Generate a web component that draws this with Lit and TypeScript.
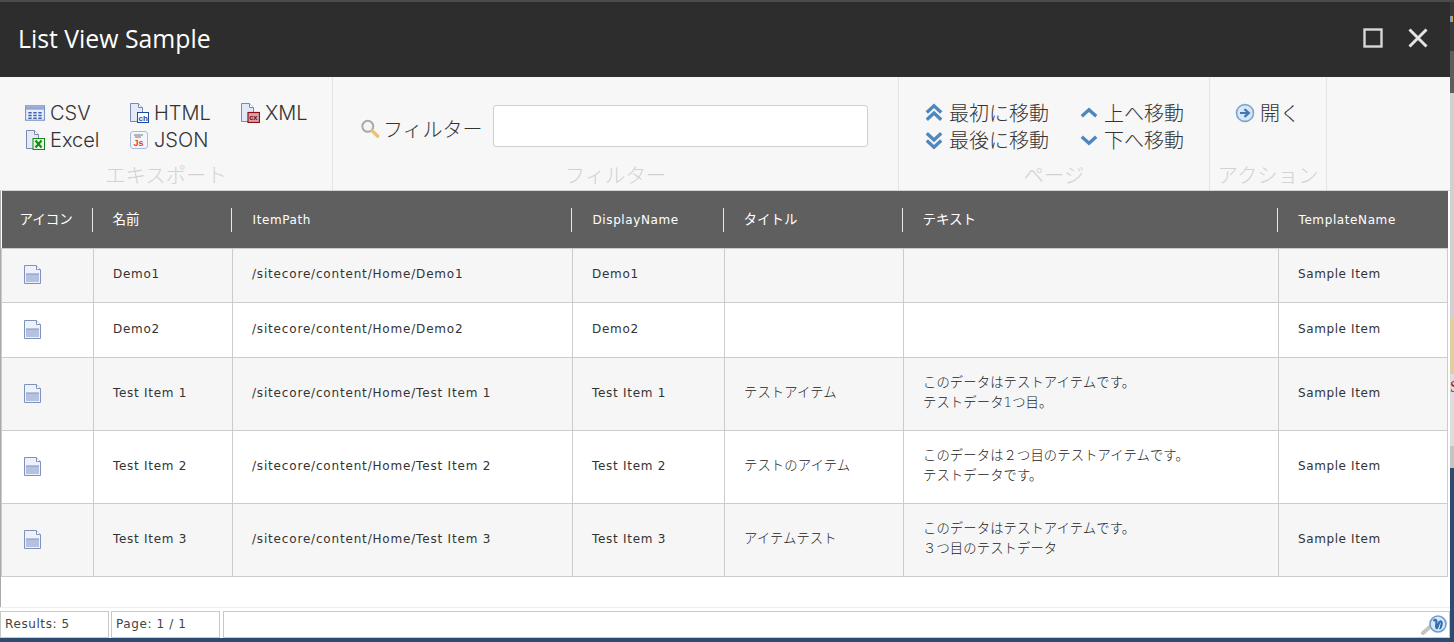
import { LitElement, css, html, svg } from 'lit'
import { customElement } from 'lit/decorators.js'

const docBase = svg`<path d="M1.5 .5h8l4 4v14h-12z" fill="#e2e9f7" stroke="#7d86b4"/><path d="M9.5 .5v4h4" fill="#fff" stroke="#7d86b4"/>`

const icons = {
	csv: html`<svg class="ic" viewBox="0 0 18 18"><rect x=".5" y="2.500" width="17" height="13" fill="#e8eefa" stroke="#7a93c8"/><rect x="1" y="3" width="16" height="3" fill="#8fa8d8"/><path d="M3 8h3v1.500H3zM7.500 8h3v1.500h-3zM12 8h3v1.500h-3zM3 10.500h3V12H3zM7.500 10.500h3V12h-3zM12 10.500h3V12h-3zM3 13h3v1.500H3zM7.500 13h3v1.500h-3zM12 13h3v1.500h-3z" fill="#3f62ad"/></svg>`,
	html: html`<svg class="ic" viewBox="0 0 20 20">${docBase}<rect x="8.500" y="9.500" width="11" height="10" fill="#fff" stroke="#1c4ba3"/><text x="9.600" y="17.500" font-size="8" font-weight="700" font-family="Liberation Sans" fill="#1c4ba3">ch</text></svg>`,
	xml: html`<svg class="ic" viewBox="0 0 20 20">${docBase}<rect x="8" y="9.500" width="11.500" height="10" fill="#d9a3a5" stroke="#8a1016" stroke-width="1.200"/><text x="9.200" y="17.400" font-size="7.500" font-weight="700" font-family="Liberation Sans" fill="#7a0a10">cx</text></svg>`,
	excel: html`<svg class="ic" viewBox="0 0 20 20">${docBase}<rect x="8" y="8.500" width="11.500" height="11" fill="#e6f5e2" stroke="#128a12"/><path d="M10.500 10.500l6 7M16.500 10.500l-6 7" stroke="#128a12" stroke-width="2"/></svg>`,
	json: html`<svg class="ic" viewBox="0 0 20 20"><rect x="1.500" y="1.500" width="17" height="17" rx="2.500" fill="#f3f5fb" stroke="#a9bbe0"/><path d="M5 4.500h9v1H5zM6 6.500h6v1H6z" fill="#777"/><text x="4.400" y="16" font-size="9" font-weight="700" font-family="Liberation Sans" fill="#e8401f">Js</text></svg>`,
	search: html`<svg class="ic search" viewBox="0 0 20 20"><circle cx="8" cy="8.500" r="5" fill="#f4f4f4" stroke="#a9a9a9" stroke-width="1.800"/><path d="M12 12.500l5 5" stroke="#eec172" stroke-width="3" stroke-linecap="round"/></svg>`,
	first: html`<svg class="ic" viewBox="0 0 18 18"><path d="M2.500 8.500L9 2.500l6.500 6M2.500 15L9 9l6.500 6" fill="none" stroke="#4f87bd" stroke-width="3"/></svg>`,
	last: html`<svg class="ic" viewBox="0 0 18 18"><path d="M2.500 3L9 9l6.500-6M2.500 9.500L9 15.500l6.500-6" fill="none" stroke="#4f87bd" stroke-width="3"/></svg>`,
	up: html`<svg class="ic" viewBox="0 0 18 18"><path d="M2.500 12L9 6l6.500 6" fill="none" stroke="#4f87bd" stroke-width="3"/></svg>`,
	down: html`<svg class="ic" viewBox="0 0 18 18"><path d="M2.500 6L9 12l6.500-6" fill="none" stroke="#4f87bd" stroke-width="3"/></svg>`,
	open: html`<svg class="ic" viewBox="0 0 18 18"><circle cx="9" cy="9" r="7.600" fill="#dbe7f5" stroke="#7ba6d6" stroke-width="1.500"/><path d="M4.500 9h7M8.500 5.500L12.500 9l-4 3.500" fill="none" stroke="#3f79b5" stroke-width="2"/></svg>`,
	item: html`<svg class="doc" viewBox="0 0 17 19"><path d="M.5 .5h12l4 4v14H.5z" fill="#eef1f9" stroke="#7f92bd"/><path d="M12.500 .5v4h4" fill="#fff" stroke="#7f92bd"/><rect x="2" y="9" width="13" height="8" fill="#b4c2e0"/><path d="M2 9h13" stroke="#7f94c0"/></svg>`,
	status: html`<svg class="status-ic" viewBox="0 0 26 20"><path d="M2 18l8-7" stroke="#c4c4c4" stroke-width="4" stroke-linecap="round"/><circle cx="17" cy="9" r="8" fill="#dbe7f5" stroke="#6f9fd2" stroke-width="1.600"/><path d="M12.500 6c2-2 3-1 3 1s-1 5 0 6 2-5 3-6 3-1 2 3-2 3-2 3" fill="none" stroke="#2f6fb0" stroke-width="2.200"/></svg>`,
}

const columns = [
	{ label: 'アイコン', width: 92, cjk: true },
	{ label: '名前', width: 139, cjk: true },
	{ label: 'ItemPath', width: 340, cjk: false },
	{ label: 'DisplayName', width: 152, cjk: false },
	{ label: 'タイトル', width: 179, cjk: true },
	{ label: 'テキスト', width: 375, cjk: true },
	{ label: 'TemplateName', width: 169, cjk: false },
]

const rows = [
	{ name: 'Demo1', path: '/sitecore/content/Home/Demo1', title: '', text: [] as string[], h: 54 },
	{ name: 'Demo2', path: '/sitecore/content/Home/Demo2', title: '', text: [] as string[], h: 55 },
	{
		name: 'Test Item 1',
		path: '/sitecore/content/Home/Test Item 1',
		title: 'テストアイテム',
		text: ['このデータはテストアイテムです。', 'テストデータ1つ目。'],
		h: 73,
	},
	{
		name: 'Test Item 2',
		path: '/sitecore/content/Home/Test Item 2',
		title: 'テストのアイテム',
		text: ['このデータは２つ目のテストアイテムです。', 'テストデータです。'],
		h: 73,
	},
	{
		name: 'Test Item 3',
		path: '/sitecore/content/Home/Test Item 3',
		title: 'アイテムテスト',
		text: ['このデータはテストアイテムです。', '３つ目のテストデータ'],
		h: 73,
	},
]

@customElement('app-root')
export class AppRoot extends LitElement {
	static styles = css`
		:host {
			display: flex;
			height: 642px;
			overflow: hidden;
			background: #2d4a70;
			font-family: 'DejaVu Sans', 'Noto Sans CJK JP', sans-serif;
		}
		.dialog {
			width: 1450px;
			height: 638px;
			flex: none;
			display: flex;
			flex-direction: column;
			background: #fff;
		}
		.strip {
			flex: 1;
			overflow: hidden;
			display: flex;
			flex-direction: column;
		}
		.strip-dark {
			height: 35px;
			background: #3a3a3a;
			border-top: 2px solid #4b4b4b;
			padding-top: 14px;
		}
		.strip-dark i {
			display: block;
			width: 3px;
			height: 6px;
			background: linear-gradient(90deg, #5b9bd5, #e8a33c);
		}
		.strip-gray {
			height: 42px;
			background: #5d5d5d;
		}
		.strip-light {
			height: 225px;
			background: #d0d0d0;
		}
		.strip-tan {
			height: 56px;
			background: #dccfa0;
		}
		.strip-note {
			height: 72px;
			background: #dddddd;
			color: #a11c1c;
			font: 16px/26px 'Liberation Serif', serif;
		}
		.strip-mid {
			height: 22px;
			background: #c4c4c4;
		}
		.titlebar {
			height: 77px;
			box-sizing: border-box;
			border-top: 2px solid #4b4b4b;
			background: #2d2d2d;
			color: #fff;
			display: flex;
			align-items: center;
			justify-content: space-between;
			padding: 0 22px 4px 18px;
			flex: none;
		}
		.titlebar h1 {
			margin: 0;
			font: 400 24.8px 'Open Sans', 'Noto Sans', sans-serif;
		}
		.win-buttons {
			display: flex;
			gap: 25px;
			align-items: center;
		}
		.win-buttons svg {
			width: 20px;
			height: 20px;
			display: block;
		}
		.ribbon {
			height: 114px;
			box-sizing: border-box;
			flex: none;
			display: flex;
			background: #f7f7f7;
			border-bottom: 1px solid #d4d4d4;
			font-family: Inter, 'Noto Sans CJK JP', 'Noto Sans', sans-serif;
			font-weight: 300;
			font-size: 20px;
			color: #333;
		}
		.group {
			box-sizing: border-box;
			border-right: 1px solid #e4e4e4;
			display: flex;
			flex-direction: column;
			flex: none;
		}
		.group-body {
			flex: 1;
			padding-top: 22px;
		}
		.group-label {
			height: 27px;
			text-align: center;
			color: #d2d2d2;
			font-size: 20.4px;
			line-height: 26px;
			white-space: nowrap;
		}
		.export {
			width: 333px;
		}
		.filter {
			width: 566px;
		}
		.paging {
			width: 311px;
		}
		.action {
			width: 117px;
		}
		.buttons {
			display: grid;
			align-content: start;
			grid-auto-rows: 27px;
		}
		.export .buttons {
			grid-template-columns: 104px 111px 90px;
			padding-left: 25px;
		}
		.paging .buttons {
			grid-template-columns: 155px 110px;
			padding-left: 25px;
		}
		.action .buttons {
			padding-left: 25px;
		}
		.btn {
			display: flex;
			align-items: center;
			gap: 5px;
			white-space: nowrap;
		}
		.ic {
			width: 20px;
			height: 20px;
			flex: none;
		}
		.ic.search {
			width: 22px;
			height: 22px;
		}
		.filter-body {
			display: flex;
			align-items: flex-start;
			padding: 28px 0 0 26px;
			gap: 10px;
		}
		.filter-label {
			display: flex;
			align-items: center;
			gap: 2px;
			height: 30px;
			margin-top: 8px;
		}
		.filter-body input {
			box-sizing: border-box;
			width: 375px;
			height: 42px;
			border: 1px solid #cfcfcf;
			border-radius: 3px;
			background: #fff;
			margin: 0;
		}
		.grid {
			height: 416px;
			flex: none;
			border-left: 1px solid #aaa;
			box-sizing: border-box;
		}
		table {
			border-collapse: collapse;
			table-layout: fixed;
			width: 1446px;
			font-size: 12px;
			letter-spacing: 0.6px;
			color: #333;
		}
		th {
			height: 57px;
			padding: 0;
			background: #5f5f5f;
			color: #fff;
			font-weight: 400;
			text-align: left;
		}
		th span {
			display: block;
			height: 24px;
			line-height: 24px;
			margin-right: 1px;
			padding-left: 20px;
			border-right: 1px solid #e8e8e8;
			white-space: nowrap;
		}
		th .cjk-head {
			font-size: 13.5px;
			line-height: 22px;
			letter-spacing: 0;
			padding-left: 19px;
		}
		th:first-child .cjk-head {
			padding-left: 18px;
		}
		th:last-child span {
			border-right: 0;
		}
		td {
			padding: 0 0 1px 19px;
			border: 1px solid #cccccc;
			vertical-align: middle;
			line-height: 19px;
			white-space: nowrap;
		}
		tr:first-child td {
			padding-bottom: 3px;
		}
		td.icon {
			padding-bottom: 3px;
		}
		tr:nth-child(odd) td {
			background: #f6f6f6;
		}
		.doc {
			width: 17px;
			height: 19px;
			display: block;
			margin: 1px 0 0 3px;
		}
		td.path {
			letter-spacing: 0.82px;
		}
		td.name {
			letter-spacing: 0.72px;
		}
		td.cjk {
			letter-spacing: 0.1px;
			font-size: 13.33px;
			font-weight: 300;
			line-height: 20px;
			color: #222;
			padding-bottom: 3px;
		}
		.status {
			height: 31px;
			box-sizing: border-box;
			flex: none;
			padding-top: 3px;
			display: flex;
			gap: 2px;
			font-size: 12px;
			letter-spacing: 0.6px;
			color: #444;
			border-top: 1px solid #eee;
		}
		.status div {
			box-sizing: border-box;
			border: 1px solid #c8c8c8;
			line-height: 24px;
			padding-left: 4px;
		}
		.status .results {
			width: 109px;
		}
		.status .page {
			width: 109px;
		}
		.status .rest {
			flex: 1;
			margin-left: 1px;
			display: flex;
			justify-content: flex-end;
			align-items: center;
		}
		.status-ic {
			width: 26px;
			height: 20px;
			margin-right: 2px;
		}
	`

	render() {
		return html`
			<div class="dialog">
				<header class="titlebar">
					<h1>List View Sample</h1>
					<div class="win-buttons">
						<svg viewBox="0 0 20 20"><rect x="1.500" y="1.500" width="17" height="17" fill="none" stroke="#d8d8d8" stroke-width="2.400" /></svg>
						<svg viewBox="0 0 20 20"><path d="M1.500 1.500l17 17M18.500 1.500l-17 17" stroke="#e4e4e4" stroke-width="3" /></svg>
					</div>
				</header>
				<section class="ribbon">
					<div class="group export">
						<div class="group-body buttons">
							<div class="btn">${icons.csv}CSV</div>
							<div class="btn">${icons.html}HTML</div>
							<div class="btn">${icons.xml}XML</div>
							<div class="btn">${icons.excel}Excel</div>
							<div class="btn">${icons.json}JSON</div>
						</div>
						<div class="group-label">エキスポート</div>
					</div>
					<div class="group filter">
						<div class="group-body filter-body">
							<div class="filter-label">${icons.search}フィルター</div>
							<input type="text" />
						</div>
						<div class="group-label">フィルター</div>
					</div>
					<div class="group paging">
						<div class="group-body buttons">
							<div class="btn">${icons.first}最初に移動</div>
							<div class="btn">${icons.up}上へ移動</div>
							<div class="btn">${icons.last}最後に移動</div>
							<div class="btn">${icons.down}下へ移動</div>
						</div>
						<div class="group-label">ページ</div>
					</div>
					<div class="group action">
						<div class="group-body buttons">
							<div class="btn">${icons.open}開く</div>
						</div>
						<div class="group-label">アクション</div>
					</div>
				</section>
				<div class="grid">
					<table>
						<colgroup>
							${columns.map((c) => html`<col style="width:${c.width}px" />`)}
						</colgroup>
						<thead>
							<tr>${columns.map((c) => html`<th><span class=${c.cjk ? 'cjk-head' : ''}>${c.label}</span></th>`)}</tr>
						</thead>
						<tbody>
							${rows.map(
								(r) => html`
									<tr style="height:${r.h}px">
										<td class="icon">${icons.item}</td>
										<td class="name">${r.name}</td>
										<td class="path">${r.path}</td>
										<td class="name">${r.name}</td>
										<td class="cjk">${r.title}</td>
										<td class="cjk">${r.text.map((t) => html`<div>${t}</div>`)}</td>
										<td>Sample Item</td>
									</tr>
								`,
							)}
						</tbody>
					</table>
				</div>
				<footer class="status">
					<div class="results">Results: 5</div>
					<div class="page">Page: 1 / 1</div>
					<div class="rest">${icons.status}</div>
				</footer>
			</div>
			<div class="strip">
				<div class="strip-dark"><i></i></div>
				<div class="strip-gray"></div>
				<div class="strip-light"></div>
				<div class="strip-tan"></div>
				<div class="strip-note">S</div>
				<div class="strip-mid"></div>
			</div>
		`
	}
}
